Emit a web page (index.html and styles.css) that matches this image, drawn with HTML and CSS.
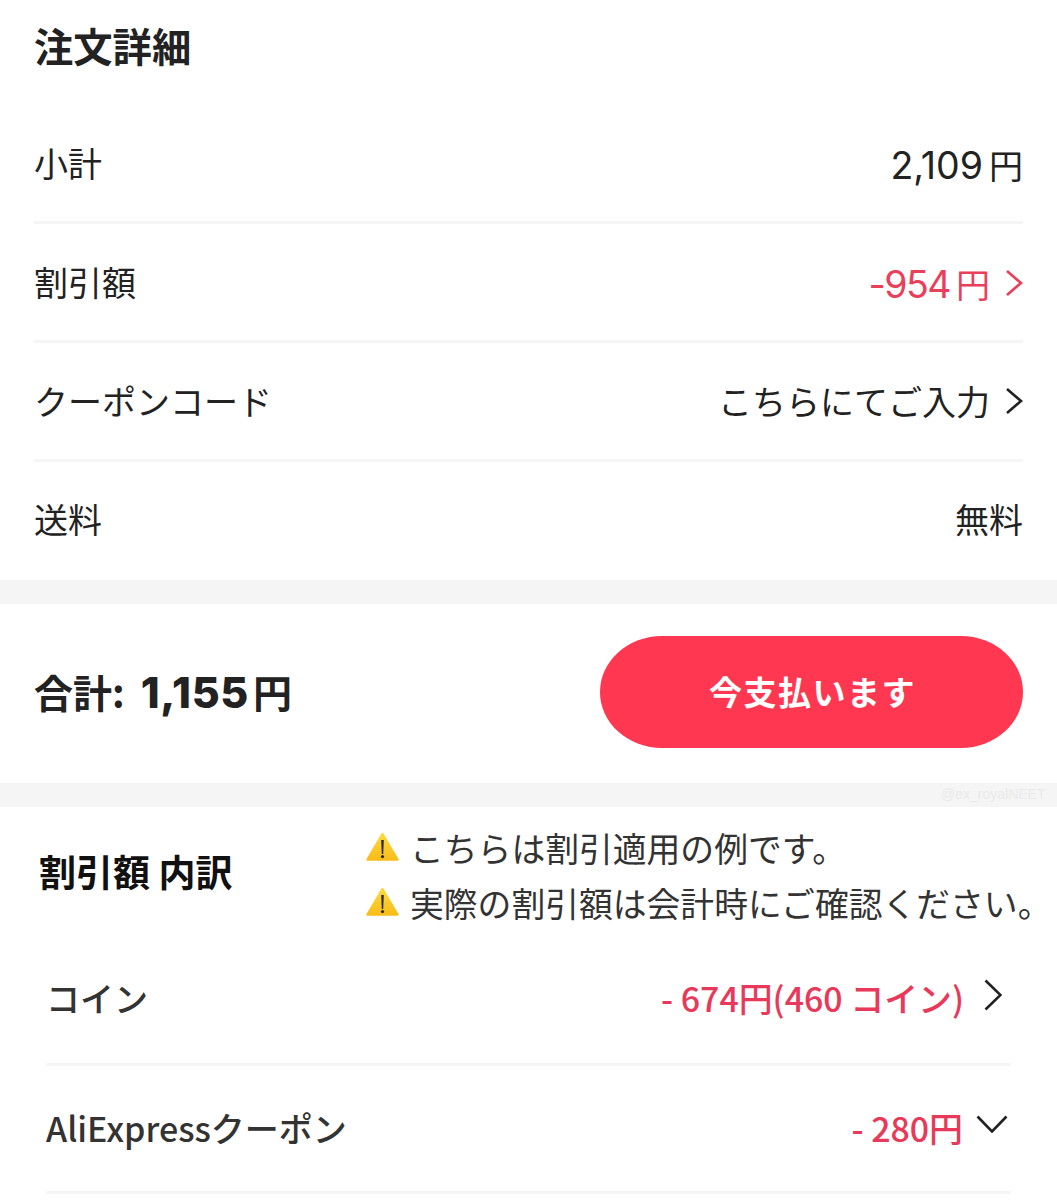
FILE: index.html
```html
<!DOCTYPE html>
<html lang="ja">
<head>
<meta charset="utf-8">
<title>注文詳細</title>
<link rel="stylesheet" href="styles.css">
</head>
<body>
<svg class="defs" aria-hidden="true"><defs><linearGradient id="amber" x1="0" y1="0" x2="0" y2="1"><stop offset="0" stop-color="#fed93b"/><stop offset="1" stop-color="#f8bd1a"/></linearGradient></defs></svg>
<section class="details">
  <h1 class="title">注文詳細</h1>
  <div class="row"><span>小計</span><span class="val"><span class="num">2,109</span><span class="yen">円</span></span></div>
  <div class="row"><span>割引額</span><span class="val red"><span class="num">-954</span><span class="yen">円</span>
    <svg class="chev" viewBox="0 0 18 28"><path d="M2 2l14 12L2 26"/></svg></span></div>
  <div class="row"><span>クーポンコード</span><span class="val plain"><span>こちらにてご入力</span>
    <svg class="chev" viewBox="0 0 18 28"><path d="M2 2l14 12L2 26"/></svg></span></div>
  <div class="row last"><span>送料</span><span class="val plain">無料</span></div>
</section>
<section class="total">
  <div class="sum"><span>合計:</span><span class="sumnum">1,155</span><span class="sumyen">円</span></div>
  <button class="pay">今支払います</button>
  <span class="mark">@ex_royalNEET</span>
</section>
<section class="breakdown">
  <h2 class="subtitle">割引額 内訳</h2>
  <div class="notes">
    <p class="note"><svg class="warn" viewBox="0 0 33 29"><path class="tri" d="M16.5 2L31.5 27.5H1.5z"/><path class="bang" d="M15.2 8h2.6l-.6 14h-1.4z"/><circle class="dot" cx="16.5" cy="24.6" r="1.6"/></svg>こちらは割引適用の例です。</p>
    <p class="note"><svg class="warn" viewBox="0 0 33 29"><path class="tri" d="M16.5 2L31.5 27.5H1.5z"/><path class="bang" d="M15.2 8h2.6l-.6 14h-1.4z"/><circle class="dot" cx="16.5" cy="24.6" r="1.6"/></svg>実際の割引額は会計時にご確認ください。</p>
  </div>
  <div class="brow first"><span>コイン</span><span class="bval"><span class="bred">- 674円(460 コイン)</span>
    <svg class="bchev" viewBox="0 0 18 32"><path d="M1.5 1.5L16.5 16 1.5 30.5"/></svg></span></div>
  <div class="brow"><span>AliExpressクーポン</span><span class="bval"><span class="bred">- 280円</span>
    <svg class="bdown" viewBox="0 0 32 18"><path d="M1.5 1.5L16 16.5 30.5 1.5"/></svg></span></div>
</section>
</body>
</html>
```
FILE: styles.css
```css
* { box-sizing: border-box; }
html, body { margin: 0; padding: 0; background: #fff; }
body {
  width: 1057px;
  height: 1200px;
  overflow: hidden;
  position: relative;
  color: #222;
  font-family: Inter, "Noto Sans CJK JP", sans-serif;
}
.defs { position: absolute; width: 0; height: 0; }
.details { padding: 0 34px; background: #fff; }
.title {
  margin: 0;
  height: 105px;
  padding-top: 18px;
  font-size: 39.3px;
  line-height: 54px;
  font-weight: 700;
  font-family: "Noto Sans CJK JP", sans-serif;
}
.row {
  height: 119px;
  padding-bottom: 1px;
  display: flex;
  justify-content: space-between;
  align-items: center;
  font-size: 34px;
  border-bottom: 3px solid #f5f5f5;
  font-family: "Noto Sans CJK JP", sans-serif;
}
.row.last { border-bottom: 0; height: 118px; padding-bottom: 6px; }
.val { display: flex; align-items: baseline; margin-top: 3px; }
.val.plain { margin-top: 0; }
.num { font-family: Inter, sans-serif; font-size: 37.5px; }
.yen { margin-left: 6px; }
.red { color: #ea3f5b; }
.red .num { letter-spacing: -1.5px; }
.chev { align-self: center; width: 18px; height: 28px; margin-left: 15px; fill: none; stroke: currentColor; stroke-width: 2.6; }
.total {
  position: relative;
  border-top: 24px solid #f5f5f5;
  border-bottom: 24px solid #f5f5f5;
  height: 227px;
  padding: 32px 34px 35px;
  display: flex;
  justify-content: space-between;
  align-items: center;
}
.sum {
  display: flex;
  align-items: baseline;
  font-size: 39px;
  font-weight: 700;
  padding-bottom: 3px;
  font-family: "Noto Sans CJK JP", sans-serif;
}
.sumnum { font-family: Inter, sans-serif; font-size: 43px; font-weight: 800; margin-left: 16px; letter-spacing: 0.6px; }
.sumyen { margin-left: 4px; }
.pay {
  width: 423px;
  height: 112px;
  padding: 0 0 3px 2px;
  border: 0;
  border-radius: 62px / 56px;
  background: #ff3750;
  color: #fff;
  font-size: 33px;
  font-weight: 700;
  letter-spacing: 1.5px;
  font-family: "Noto Sans CJK JP", sans-serif;
}
.mark {
  position: absolute;
  left: 941px;
  bottom: -20px;
  font: 14px/18px "Liberation Sans", sans-serif;
  color: #eaeaea;
}
.breakdown {
  padding: 0 46px;
  font-family: "Noto Sans CJK JP", sans-serif;
}
.subtitle {
  margin: 0 0 0 -7px;
  height: 132px;
  padding-top: 37px;
  font-size: 37px;
  line-height: 54px;
  font-weight: 700;
  color: #111;
}
.notes { position: absolute; left: 366px; top: 820px; }
.note {
  margin: 0;
  height: 55px;
  display: flex;
  align-items: center;
  font-size: 33.8px;
  line-height: 55px;
  color: #333;
  white-space: nowrap;
}
.warn { width: 33px; height: 29px; margin: -2px 11px 0 0; flex: none; }
.tri { fill: url(#amber); stroke: url(#amber); stroke-width: 2.4; stroke-linejoin: round; }
.bang { fill: #2a2a2a; }
.dot { fill: #2a2a2a; }
.brow {
  height: 128px;
  padding-bottom: 3px;
  display: flex;
  justify-content: space-between;
  align-items: center;
  font-size: 34px;
  font-weight: 500;
  color: #333;
  border-bottom: 3px solid #f5f5f5;
}
.brow.first { height: 127px; padding-bottom: 8px; }
.bval { display: flex; align-items: center; }
.bred { color: #e8395a; font-size: 33.9px; font-weight: 500; }
.bchev { width: 18px; height: 32px; margin: -4px 9px 0 20px; fill: none; stroke: #222; stroke-width: 2.6; }
.bdown { width: 32px; height: 18px; margin: -7px 3px 0 13px; fill: none; stroke: #222; stroke-width: 2.6; }
```
